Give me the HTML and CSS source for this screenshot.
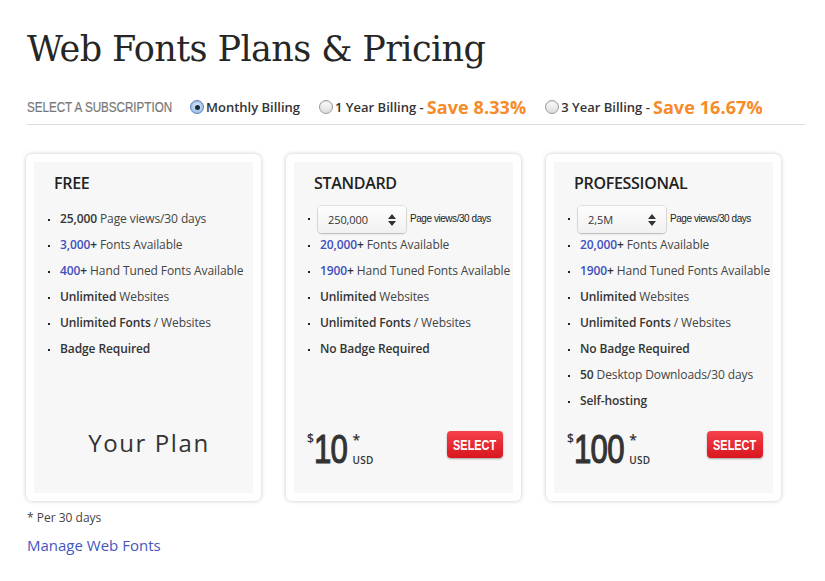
FILE: index.html
```html
<!DOCTYPE html>
<html>
<head>
<meta charset="utf-8">
<link rel="stylesheet" href="styles.css">
</head>
<body>
<div class="page">
  <h1 class="title">Web Fonts Plans &amp; Pricing</h1>
  <div class="subs">
    <span class="subs-label"><span class="narrow">SELECT A SUBSCRIPTION</span></span>
    <label class="opt"><span class="radio on"><span class="dot"></span></span>Monthly Billing</label>
    <label class="opt"><span class="radio"></span>1 Year Billing -<span class="save">Save 8.33%</span></label>
    <label class="opt"><span class="radio"></span>3 Year Billing -<span class="save">Save 16.67%</span></label>
  </div>

  <div class="plans">
    <div class="card">
      <div class="panel">
        <h2 class="plan-name">FREE</h2>
        <ul class="features">
          <li><b>25,000</b> Page views/30 days</li>
          <li><b class="hl">3,000</b><b>+</b> Fonts Available</li>
          <li><b class="hl">400</b><b>+</b> Hand Tuned Fonts Available</li>
          <li><b>Unlimited</b> Websites</li>
          <li><b>Unlimited Fonts</b> / Websites</li>
          <li><b>Badge Required</b></li>
        </ul>
        <div class="foot center"><span class="your-plan">Your Plan</span></div>
      </div>
    </div>

    <div class="card">
      <div class="panel">
        <h2 class="plan-name">STANDARD</h2>
        <ul class="features">
          <li class="sel-row"><span class="select-box"><span>250,000</span><svg class="updown" width="8" height="12" viewBox="0 0 8 12"><path d="M4 0 L8 5 L0 5 Z M4 12 L8 7 L0 7 Z" fill="#333"/></svg></span><span class="pv">Page views/30 days</span></li>
          <li><b class="hl">20,000</b><b>+</b> Fonts Available</li>
          <li><b class="hl">1900</b><b>+</b> Hand Tuned Fonts Available</li>
          <li><b>Unlimited</b> Websites</li>
          <li><b>Unlimited Fonts</b> / Websites</li>
          <li><b>No Badge Required</b></li>
        </ul>
        <div class="foot">
          <div class="price"><span class="cur">$</span><span class="amt d2">10</span><span class="meta"><span class="star">*</span><span class="usd">USD</span></span></div>
          <button class="btn"><span class="btn-text">SELECT</span></button>
        </div>
      </div>
    </div>

    <div class="card">
      <div class="panel">
        <h2 class="plan-name">PROFESSIONAL</h2>
        <ul class="features">
          <li class="sel-row"><span class="select-box"><span>2,5M</span><svg class="updown" width="8" height="12" viewBox="0 0 8 12"><path d="M4 0 L8 5 L0 5 Z M4 12 L8 7 L0 7 Z" fill="#333"/></svg></span><span class="pv">Page views/30 days</span></li>
          <li><b class="hl">20,000</b><b>+</b> Fonts Available</li>
          <li><b class="hl">1900</b><b>+</b> Hand Tuned Fonts Available</li>
          <li><b>Unlimited</b> Websites</li>
          <li><b>Unlimited Fonts</b> / Websites</li>
          <li><b>No Badge Required</b></li>
          <li><b>50</b> Desktop Downloads/30 days</li>
          <li><b>Self-hosting</b></li>
        </ul>
        <div class="foot">
          <div class="price"><span class="cur">$</span><span class="amt d3">100</span><span class="meta"><span class="star">*</span><span class="usd">USD</span></span></div>
          <button class="btn"><span class="btn-text">SELECT</span></button>
        </div>
      </div>
    </div>
  </div>

  <p class="note">* Per 30 days</p>
  <a class="manage" href="#">Manage Web Fonts</a>
</div>
</body>
</html>
```

FILE: styles.css
```css
* { box-sizing: border-box; }
html, body { margin: 0; padding: 0; background: #fff; }
body {
  font-family: "Open Sans", "DejaVu Sans", sans-serif;
  color: #333;
}
.page {
  margin-left: 27px;
  width: 778px;
}
.title {
  margin: 27px 0 0;
  font-family: "DejaVu Serif", "Liberation Serif", serif;
  font-weight: normal;
  font-size: 35px;
  line-height: 44px;
  color: #262626;
  letter-spacing: -0.6px;
}
.subs {
  margin-top: 26px;
  display: flex;
  align-items: center;
  height: 20px;
  font-size: 13px;
  font-weight: 600;
  color: #333;
  box-sizing: content-box;
  padding-bottom: 7px;
  border-bottom: 1px solid #dedede;
}
.subs-label {
  display: inline-block;
  width: 163px;
  flex: none;
  white-space: nowrap;
  font-family: "Liberation Sans", sans-serif;
  font-size: 14px;
  font-weight: normal;
  color: #777;
}
.narrow {
  display: inline-block;
  transform: scaleX(0.83);
  transform-origin: left center;
  -webkit-text-stroke: 0.2px #777;
}
.opt {
  display: flex;
  align-items: center;
  margin-right: 19px;
  white-space: nowrap;
}
.opt:last-child { margin-right: 0; }
.radio {
  width: 14px;
  height: 14px;
  border-radius: 50%;
  border: 1px solid #9a9a9a;
  background: linear-gradient(#fdfdfd, #dcdcdc);
  margin-right: 2px;
  display: flex;
  align-items: center;
  justify-content: center;
  box-shadow: inset 0 1px 1px rgba(0,0,0,0.1);
}
.radio.on {
  border-color: #5a7fb8;
  background: radial-gradient(circle at 50% 40%, #d8e9fb, #8cb4e6);
}
.radio .dot {
  width: 5px;
  height: 5px;
  border-radius: 50%;
  background: #1c2a3a;
}
.save {
  font-size: 18px;
  font-weight: bold;
  color: #f68b28;
  margin-left: 3px;
  letter-spacing: 0.1px;
}
.plans {
  margin-top: 29px;
  display: flex;
  gap: 25px;
  margin-left: -1px;
}
.card {
  width: 235px;
  height: 347px;
  padding: 8px;
  background: #fff;
  border-radius: 6px;
  box-shadow: 0 0 4px rgba(0,0,0,0.22);
}
.panel {
  height: 100%;
  background: #f7f7f7;
  display: flex;
  flex-direction: column;
  padding: 10px 0 0 14px;
}
.plan-name {
  margin: 0 0 12px 6px;
  font-size: 16px;
  line-height: 22px;
  font-weight: 600;
  color: #222;
  letter-spacing: -0.3px;
}
.features {
  list-style: none;
  margin: 0;
  padding: 0;
}
.features li {
  height: 26px;
  line-height: 26px;
  font-size: 12px;
  color: #444;
  white-space: nowrap;
  letter-spacing: -0.1px;
}
.features li::before {
  content: "";
  display: inline-block;
  vertical-align: middle;
  width: 2px;
  height: 2px;
  background: #222;
  margin-right: 10px;
}
.features b { font-weight: 600; color: #333; }
.features b.hl { color: #3f4fbf; }
.sel-row { display: flex; align-items: center; }
.sel-row::before { flex: none; }
.select-box {
  width: 88px;
  height: 27px;
  border-radius: 4px;
  background: linear-gradient(#fdfdfd, #f1f1f1);
  box-shadow: 0 0 0 1px rgba(0,0,0,0.08), 0 1px 2px rgba(0,0,0,0.2);
  display: flex;
  align-items: center;
  justify-content: space-between;
  padding: 0 10px 0 10px;
  font-size: 11px;
  line-height: 14px;
  color: #333;
  margin-left: -2px;
  margin-right: 4px;
  margin-top: 1px;
}
.pv {
  font-family: "Liberation Sans", sans-serif;
  font-size: 10px;
  line-height: 14px;
  color: #222;
  letter-spacing: -0.45px;
}
.foot {
  margin-top: auto;
  margin-bottom: 30px;
  height: 40px;
  display: flex;
  align-items: flex-start;
  justify-content: space-between;
  padding: 0 10px 0 0;
}
.foot.center {
  justify-content: center;
  align-items: center;
  padding: 0 3px 0 0;
}
.your-plan {
  font-size: 24px;
  line-height: 30px;
  color: #333;
  letter-spacing: 1.6px;
}
.price {
  display: flex;
  align-items: flex-start;
  color: #333;
  margin-top: 6px;
  margin-left: -1px;
}
.cur {
  font-size: 12px;
  line-height: 12px;
  font-weight: 600;
  margin-top: 4px;
}
.amt {
  display: inline-block;
  font-family: "Liberation Sans", sans-serif;
  font-size: 41px;
  line-height: 40px;
  letter-spacing: -1px;
  color: #333;
  -webkit-text-stroke: 1.2px #333;
  transform: scaleX(0.76);
  transform-origin: left top;
}
.amt.d2 { margin-right: -10px; }
.amt.d3 { margin-right: -15px; }
.meta {
  display: flex;
  flex-direction: column;
  margin-left: 5px;
  font-size: 10px;
  font-weight: 600;
  line-height: 12px;
}
.star { font-size: 14px; line-height: 14px; margin-top: 4px; }
.usd { margin-top: 7px; letter-spacing: 0.3px; }
.btn {
  margin-top: 8px;
  width: 56px;
  height: 27px;
  border: none;
  border-radius: 4px;
  background: linear-gradient(#f4414a, #d9161f);
  box-shadow: 0 1px 2px rgba(0,0,0,0.35);
  color: #fff;
  font-family: "Liberation Sans", sans-serif;
  font-size: 14px;
  font-weight: bold;
  padding: 0;
  cursor: pointer;
}
.btn-text {
  display: inline-block;
  transform: scaleX(0.78);
}
.note {
  margin: 9px 0 0;
  font-size: 12px;
  line-height: 16px;
  color: #444;
}
.manage {
  display: inline-block;
  margin-top: 9px;
  font-size: 15px;
  line-height: 20px;
  color: #4556c0;
  text-decoration: none;
}
```
